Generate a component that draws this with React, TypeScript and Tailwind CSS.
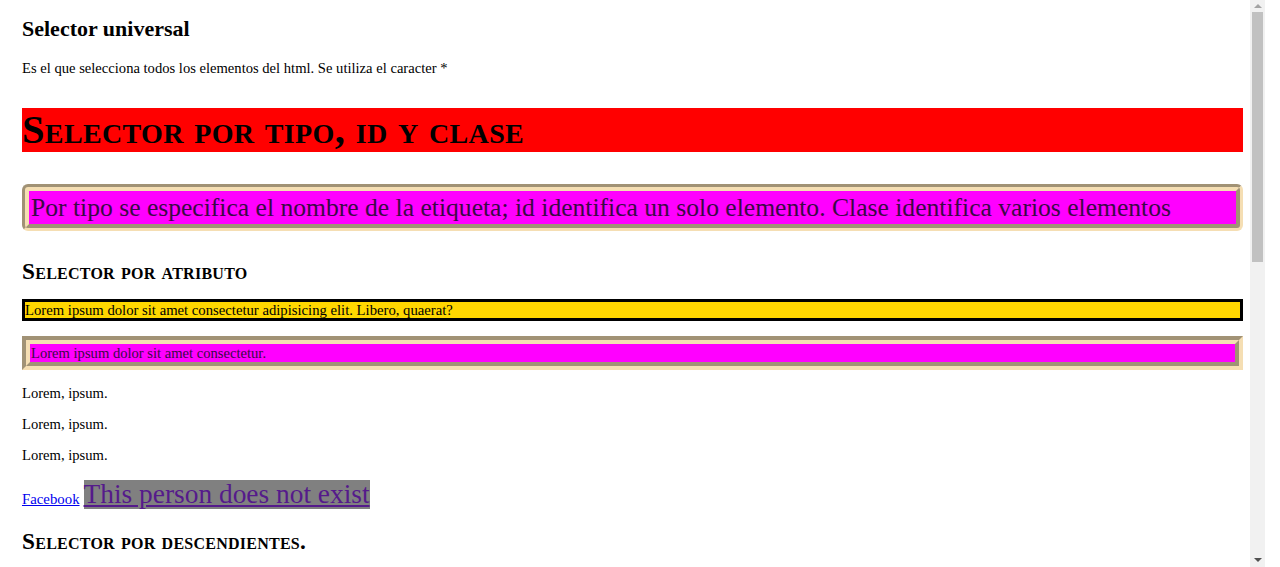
import React from 'react';

const serif = { fontFamily: '"Liberation Serif", "Times New Roman", serif' };

function FakeScrollbar() {
  return (
    <div className="flex h-full w-[15px] shrink-0 flex-col items-center bg-[#f1f1f1]">
      <div className="flex h-[12px] w-full items-center justify-center">
        <div className="h-0 w-0 border-x-[4px] border-b-[4px] border-x-transparent border-b-[#a3a3a3]" />
      </div>
      <div className="h-[250px] w-[11px] bg-[#c1c1c1]" />
      <div className="flex-1" />
      <div className="flex h-[14px] w-full items-center justify-center">
        <div className="h-0 w-0 border-x-[4px] border-t-[4px] border-x-transparent border-t-[#505050]" />
      </div>
    </div>
  );
}

export default function App() {
  return (
    <div className="flex h-[567px] w-[1280px] overflow-hidden bg-white text-black" style={serif}>
      {/* Page content */}
      <div className="flex min-w-0 flex-1 flex-col pl-[22px] pr-[7px] pt-[17px] text-[14.6px] leading-[16px]">
        <h2 className="text-[22px] font-bold leading-[24px]">Selector universal</h2>
        <p className="mt-[19px]">Es el que selecciona todos los elementos del html. Se utiliza el caracter *</p>

        <h1 className="mt-[32px] bg-[#ff0000] text-[40.5px] font-bold leading-[44px] tracking-[0.35px] [font-variant:small-caps]">
          Selector por tipo, id y clase
        </h1>

        {/* Groove box with rounded corners */}
        <div className="mt-[32px] rounded-[6px] border-[7px] border-[#f5deb3] [border-style:groove]">
          <p className="bg-[#ff00ff] pl-[2px] text-[25.6px] leading-[33px] text-[#3a0a45]">
            Por tipo se especifica el nombre de la etiqueta; id identifica un solo elemento. Clase identifica varios elementos
          </p>
        </div>

        <h3 className="mt-[27px] text-[23.3px] font-bold leading-[26px] tracking-[0.25px] [font-variant:small-caps]">
          Selector por atributo
        </h3>

        <p className="mt-[15px] border-[3px] border-black bg-[#ffd700] text-[14.7px] leading-[16px]">
          Lorem ipsum dolor sit amet consectetur adipisicing elit. Libero, quaerat?
        </p>

        <div className="mt-[15px] border-[8px] border-[#f5deb3] [border-style:groove]">
          <p className="bg-[#ff00ff] pl-[1px] leading-[18px] text-[#3a0a45]">Lorem ipsum dolor sit amet consectetur.</p>
        </div>

        <p className="mt-[15px]">Lorem, ipsum.</p>
        <p className="mt-[15px]">Lorem, ipsum.</p>
        <p className="mt-[15px]">Lorem, ipsum.</p>

        <p className="mt-[17px] flex items-end gap-[4px]">
          <a href="#" className="mb-[2px] text-[14.8px] text-[#0000ee] underline">Facebook</a>
          <a href="#" className="bg-[#808080] text-[27.4px] leading-[29px] text-[#551a8b] underline">
            This person does not exist
          </a>
        </p>

        <h3 className="mt-[19px] text-[23.3px] font-bold leading-[26px] tracking-[0.25px] [font-variant:small-caps]">
          Selector por descendientes.
        </h3>
      </div>

      <FakeScrollbar />
      <div className="w-[15px] shrink-0" />
    </div>
  );
}
